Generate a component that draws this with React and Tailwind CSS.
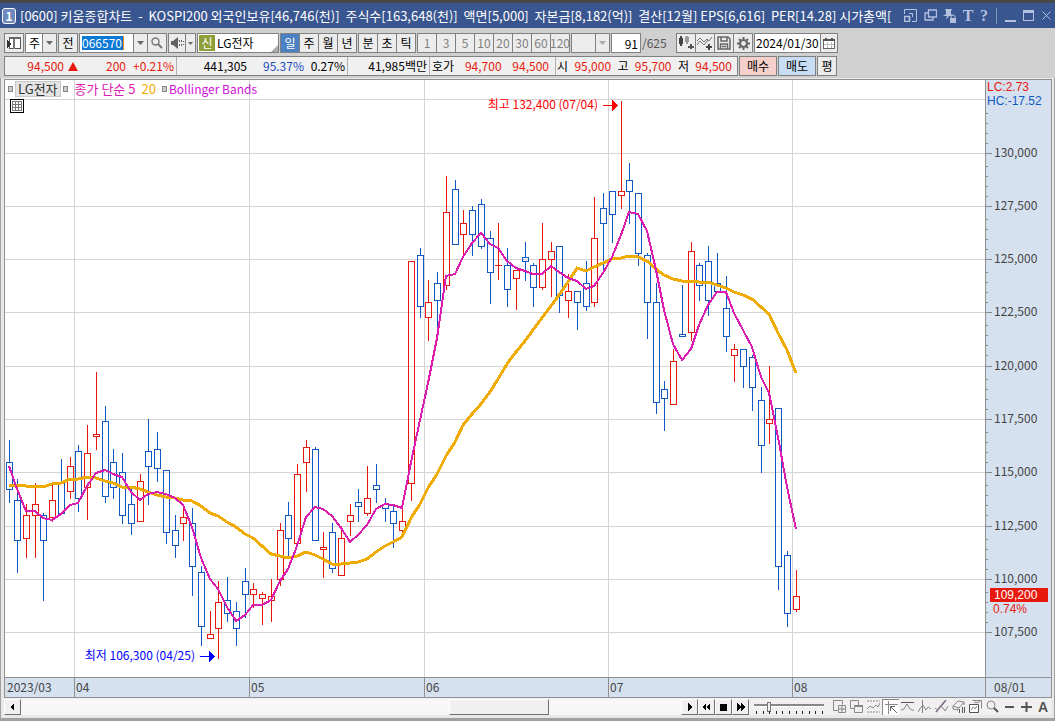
import { useState } from 'react';

// Each candle: [up (1) or down (0), high, body top, body bottom, low] as y positions
const CANDLES = [
  [0, 440, 462, 489, 502], [0, 479, 500, 540, 572], [1, 504, 515, 538, 557], [1, 483, 504, 515, 557],
  [0, 513, 515, 540, 600], [1, 483, 500, 517, 521], [0, 459, 483, 513, 513], [1, 457, 466, 491, 498],
  [0, 445, 451, 498, 511], [1, 425, 453, 487, 519], [1, 372, 434, 436, 449], [0, 406, 421, 496, 502],
  [0, 449, 462, 487, 498], [0, 453, 472, 515, 523], [0, 489, 504, 523, 534], [1, 474, 481, 521, 521],
  [0, 419, 451, 466, 504], [0, 432, 449, 468, 481], [0, 470, 470, 532, 543], [0, 515, 530, 545, 557],
  [1, 504, 517, 523, 540], [0, 508, 523, 566, 595], [0, 566, 572, 626, 645], [1, 611, 634, 638, 638],
  [1, 581, 602, 628, 658], [0, 577, 600, 613, 621], [0, 602, 611, 628, 645], [0, 568, 581, 594, 617],
  [1, 583, 589, 594, 607], [1, 592, 594, 598, 624], [1, 579, 596, 600, 621], [1, 523, 530, 579, 585],
  [0, 502, 515, 538, 557], [1, 464, 474, 543, 545], [1, 440, 447, 462, 491], [0, 447, 449, 540, 540],
  [1, 532, 547, 549, 577], [0, 523, 532, 568, 572], [1, 526, 538, 575, 575], [1, 504, 515, 521, 535],
  [0, 489, 502, 506, 521], [1, 466, 498, 513, 515], [0, 464, 485, 489, 502], [0, 498, 504, 508, 521],
  [0, 504, 511, 523, 547], [1, 502, 521, 530, 536], [1, 261, 261, 483, 500], [0, 248, 255, 306, 317],
  [1, 280, 302, 317, 340], [0, 272, 283, 300, 335], [1, 176, 212, 285, 289], [0, 180, 189, 244, 244],
  [1, 210, 223, 234, 254], [0, 206, 210, 234, 255], [0, 199, 204, 246, 248], [0, 231, 238, 272, 303],
  [1, 223, 265, 265, 279], [0, 248, 265, 289, 306], [1, 270, 270, 278, 309], [0, 242, 257, 261, 280],
  [0, 263, 265, 287, 306], [1, 223, 259, 287, 289], [1, 242, 251, 259, 296], [0, 246, 246, 295, 312],
  [1, 274, 291, 300, 317], [0, 291, 291, 302, 329], [0, 261, 283, 306, 310], [1, 197, 238, 302, 306],
  [0, 193, 208, 223, 271], [0, 191, 191, 214, 242], [1, 101, 191, 195, 208], [0, 163, 180, 191, 223],
  [0, 193, 193, 253, 265], [0, 253, 255, 302, 338], [0, 283, 302, 402, 413], [0, 381, 389, 398, 430],
  [1, 349, 361, 404, 404], [0, 285, 334, 336, 336], [1, 242, 251, 332, 340], [0, 263, 265, 285, 300],
  [0, 246, 261, 300, 315], [0, 253, 283, 291, 291], [0, 276, 308, 336, 351], [1, 344, 349, 355, 381],
  [0, 349, 349, 366, 387], [0, 355, 357, 387, 410], [0, 387, 400, 445, 472], [1, 366, 419, 423, 443],
  [0, 408, 408, 566, 589], [0, 551, 555, 613, 626], [1, 570, 596, 609, 611],
];

const MA5 = [
  466, 489, 511, 511, 518, 520, 514, 505, 503, 486, 473, 470, 474, 477, 492, 500, 494, 492, 494, 498, 505, 527, 558,
  579, 589, 607, 621, 615, 605, 605, 600, 581, 569, 546, 517, 507, 509, 516, 528, 542, 535, 525, 509, 504, 505, 508,
  462, 420, 383, 338, 276, 274, 257, 243, 233, 244, 248, 261, 268, 271, 274, 274, 266, 272, 278, 281, 289, 286, 273,
  257, 235, 212, 214, 231, 270, 310, 344, 360, 349, 325, 305, 292, 292, 313, 330, 347, 377, 393, 437, 487, 529,
];

const MA20 = [
  485, 485, 486, 486, 487, 484, 483, 479, 479, 477, 478, 481, 483, 487, 487, 489, 492, 495, 497, 498, 500, 501, 506,
  513, 516, 522, 527, 534, 538, 546, 554, 556, 558, 556, 552, 555, 559, 564, 564, 563, 562, 559, 552, 546, 542, 537,
  518, 504, 488, 474, 456, 442, 425, 414, 404, 392, 379, 364, 352, 341, 330, 318, 306, 295, 282, 268, 271, 267, 263,
  259, 258, 256, 257, 261, 269, 275, 279, 281, 281, 282, 282, 285, 288, 292, 295, 299, 307, 314, 333, 350, 373,
];

const PRICES = [
  ['130,000', 153], ['127,500', 206], ['125,000', 259], ['122,500', 312], ['120,000', 366],
  ['117,500', 419], ['115,000', 472], ['112,500', 526], ['110,000', 579], ['107,500', 632],
];

const MONTH_LINES = [74, 249, 424, 608, 792];

const candleX = (i) => Math.floor(9 + i * 8.746);
const toPoints = (ys) => ys.map((y, i) => `${candleX(i)},${y}`).join(' ');

const RED = '#e8190c';
const BLUE = '#1059c4';

function Arrow({ className = 'text-[#666]' }) {
  return (
    <svg className={`pointer-events-none ${className}`} width="7" height="4" viewBox="0 0 7 4" fill="currentColor">
      <path d="M0 0h7L3.5 4z" />
    </svg>
  );
}

function Group({ className = '', children }) {
  return (
    <div className={`flex h-5 shrink-0 items-stretch divide-x divide-[#808080] border border-[#808080] bg-[#ececec] ${className}`}>
      {children}
    </div>
  );
}

function IconButton({ label, className = 'w-[18px]', children }) {
  return (
    <button type="button" aria-label={label} className={`flex items-center justify-center ${className}`}>
      {children}
    </button>
  );
}

function TitleBar() {
  return (
    <header className="flex h-[25px] items-center bg-[#3a5690] text-white">
      <span className="ml-[2px] flex h-4 w-[14px] shrink-0 items-center justify-center rounded-[3px] border border-white bg-[#6f88bd] text-xs font-bold">
        1
      </span>
      <h1 className="ml-1 min-w-0 flex-1 overflow-hidden text-[13px] leading-5 whitespace-pre">
        {'[0600] 키움종합차트  -  KOSPI200 외국인보유[46,746(천)]  주식수[163,648(천)]  액면[5,000]  자본금[8,182(억)]  결산[12월] EPS[6,616]  PER[14.28] 시가총액['}
      </h1>
      <div className="flex shrink-0 items-center text-[#b4c2e0]">
        <IconButton label="레이아웃" className="w-5">
          <svg width="13" height="13" viewBox="0 0 13 13" fill="none" stroke="currentColor">
            <path d="M.5 5V.5h12v12H8" />
            <path d="M.5 7.500h5v5h-5z" strokeWidth="1.6" />
            <path d="M5 4.500h3.500V8" />
          </svg>
        </IconButton>
        <IconButton label="창 복제" className="w-5">
          <svg width="13" height="13" viewBox="0 0 13 13" fill="none" stroke="currentColor" strokeWidth="1.3">
            <path d="M4.500 1h8v7h-8zM4 4H1v7h8V8.500" />
          </svg>
        </IconButton>
        <IconButton label="고정" className="w-5">
          <svg width="14" height="14" viewBox="0 0 14 14" fill="currentColor">
            <path d="M2 0h7L8 2v3l2 2H6L3 11l1-4H0l3-2V2z" />
            <path d="M7 9h6v5H7z" />
            <path d="M8 9V8a2 2 0 0 1 4 0v1" fill="none" stroke="currentColor" />
          </svg>
        </IconButton>
        <button type="button" className="w-4 font-['Liberation_Serif',serif] text-base leading-5 font-bold">T</button>
        <button type="button" className="mr-1 w-4 font-['Liberation_Serif',serif] text-base leading-5 font-bold">?</button>
        <span className="h-4 w-px bg-[#8295bf]" />
        <IconButton label="최소화" className="ml-1 w-[18px]">
          <svg width="11" height="12" viewBox="0 0 11 12"><path d="M0 10h11v2H0z" fill="currentColor" /></svg>
        </IconButton>
        <IconButton label="최대화" className="w-[18px]">
          <svg width="11" height="11" viewBox="0 0 11 11"><path d="M0 0h11v11H0zM1 3v7h9V3z" fillRule="evenodd" fill="currentColor" /></svg>
        </IconButton>
        <IconButton label="닫기" className="w-[18px]">
          <svg width="9" height="9" viewBox="0 0 9 9"><path d="M.5.5l8 8M8.500.5l-8 8" stroke="currentColor" /></svg>
        </IconButton>
      </div>
    </header>
  );
}

function Toolbar() {
  const [period, setPeriod] = useState('일');
  const [code, setCode] = useState('066570');
  const [count, setCount] = useState('91');
  const [date, setDate] = useState('2024/01/30');

  return (
    <div className="flex items-center gap-px px-1 text-xs leading-[18px]">
      <Group className="w-5">
        <IconButton label="패널 열기">
          <svg width="16" height="14" viewBox="0 0 16 14" shapeRendering="crispEdges">
            <path d="M3.500 1.500h11v11h-11z" fill="#fff" stroke="#555" />
            <path d="M3 1h12v2H3z" fill="#666" />
            <path d="M7 3h2v10H7z" fill="#777" />
            <path d="M1 4l4 4-4 4z" fill="#333" />
          </svg>
        </IconButton>
      </Group>
      <Group className="w-8">
        <select aria-label="시장 구분" className="w-[17px] appearance-none bg-white pl-[3px] text-black">
          <option>주</option>
          <option>선</option>
        </select>
        <span className="flex flex-1 items-center justify-center"><Arrow /></span>
      </Group>
      <Group className="w-5">
        <button type="button" className="flex-1">전</button>
      </Group>
      <Group className="w-[88px]">
        <div className="flex w-[54px] items-center bg-white pl-[2px]">
          <input
            aria-label="종목코드"
            className="h-[14px] w-[42px] border-r border-[#ff8c1a] bg-[#0a78d4] text-white outline-none"
            value={code}
            onChange={(e) => setCode(e.target.value)}
          />
        </div>
        <IconButton label="종목 목록" className="w-[14px]"><Arrow /></IconButton>
        <IconButton label="종목 검색">
          <svg width="12" height="12" viewBox="0 0 12 12" fill="none" stroke="#777">
            <circle cx="4.500" cy="4.500" r="3.500" strokeWidth="1.4" />
            <path d="M7 7l4 4" strokeWidth="2" />
          </svg>
        </IconButton>
      </Group>
      <Group className="w-7">
        <IconButton label="소리" className="w-[17px]">
          <svg width="13" height="12" viewBox="0 0 13 12" fill="#606060">
            <path d="M0 4h2l5-4v12L2 8H0z" />
            <path d="M8 3h1v2H8zM8 7h1v2H8zM10 3h1v2h-1zM10 7h1v2h-1zM12 4h1v1h-1zM12 7h1v1h-1z" />
          </svg>
        </IconButton>
        <IconButton label="소리 설정" className="w-[9px]">
          <svg width="5" height="3" viewBox="0 0 5 3" fill="#666"><path d="M0 0h5L2.500 3z" /></svg>
        </IconButton>
      </Group>
      <Group className="w-[82px]">
        <div className="flex flex-1 items-center bg-white pl-px">
          <span className="mr-[2px] h-4 w-4 bg-[#8f9f3a] text-center leading-4 text-white">신</span>
          <span>LG전자</span>
          <svg className="mt-auto ml-auto" width="7" height="7" viewBox="0 0 7 7"><path d="M7 0v7H0z" fill="#aaa" /></svg>
        </div>
      </Group>
      <Group className="w-[77px]">
        {['일', '주', '월', '년'].map((p) => (
          <button
            key={p}
            type="button"
            onClick={() => setPeriod(p)}
            className={`flex-1 ${p === period ? 'bg-[#4a80c4] text-white' : 'text-black'}`}
          >
            {p}
          </button>
        ))}
      </Group>
      <Group className="w-[58px]">
        {['분', '초', '틱'].map((p) => (
          <button key={p} type="button" onClick={() => setPeriod(p)} className="flex-1">{p}</button>
        ))}
      </Group>
      <Group className="w-[153px] text-[#808080]">
        {['1', '3', '5', '10', '20', '30', '60', '120'].map((n) => (
          <button key={n} type="button" className="flex w-0 flex-1 justify-center">{n}</button>
        ))}
      </Group>
      <Group className="w-[39px]">
        <select aria-label="주기" disabled className="w-6 appearance-none bg-transparent">
          <option></option>
        </select>
        <span className="flex flex-1 items-center justify-center"><Arrow className="text-[#aaa]" /></span>
      </Group>
      <label className="flex items-center text-[#555]">
        <input
          aria-label="표시 개수"
          className="mr-px h-5 w-[30px] border border-[#808080] bg-white pr-[2px] text-right text-black outline-none"
          value={count}
          onChange={(e) => setCount(e.target.value)}
        />
        <span className="w-[33px]">/625</span>
      </label>
      <Group className="w-[77px]">
        <IconButton label="종목 추가" className="flex-1">
          <svg width="15" height="14" viewBox="0 0 15 14" shapeRendering="crispEdges">
            <path d="M0 2h4v6H0zM1 0h2v10H1z" fill="#444" />
            <path d="M6 1h4v5H6zM7 0h2v8H7z" fill="#999" />
            <path d="M11 8h2v5h-2zM9 10h6v2H9z" fill="#555" />
          </svg>
        </IconButton>
        <IconButton label="지표 추가" className="flex-1">
          <svg width="16" height="15" viewBox="0 0 16 15" fill="none" stroke="#777">
            <path d="M0 5l3-3 4 4 3-3 2 2 3-4M0 9l3-4 4 4 4-5" />
            <path d="M12 8v6M9 11h6" stroke="#444" strokeWidth="2" />
          </svg>
        </IconButton>
        <IconButton label="저장" className="flex-1">
          <svg width="14" height="14" viewBox="0 0 14 14" fill="none" stroke="#666" strokeWidth="1.5">
            <path d="M1 1h10l2 2v10H1zM4 1v4h6V1M3.500 13V8h7v5M5 10.500h4" />
          </svg>
        </IconButton>
        <IconButton label="설정" className="flex-1">
          <svg width="13" height="13" viewBox="0 0 13 13" fill="none" stroke="#666">
            <circle cx="6.500" cy="6.500" r="3.500" strokeWidth="2.200" />
            <path d="M6.500 0v2M6.500 11v2M0 6.500h2M11 6.500h2M2 2l1.500 1.500M9.500 9.500L11 11M11 2L9.500 3.500M3.500 9.500L2 11" strokeWidth="2" />
          </svg>
        </IconButton>
      </Group>
      <Group className="w-[84px]">
        <input
          aria-label="기준일"
          className="w-0 flex-1 bg-white pl-px outline-none"
          value={date}
          onChange={(e) => setDate(e.target.value)}
        />
        <IconButton label="달력" className="w-4">
          <svg width="12" height="11" viewBox="0 0 12 11" shapeRendering="crispEdges">
            <path d="M.5 1.500h11v9H.5z" fill="#fff" stroke="#666" />
            <path d="M0 1h12v2H0zM2 0h2v2H2zM8 0h2v2H8z" fill="#555" />
            <path d="M4.500 4v6M8.500 4v6M1 6.500h10" stroke="#bbb" />
          </svg>
        </IconButton>
      </Group>
    </div>
  );
}

function QuoteBar() {
  return (
    <div className="flex gap-px px-1 pt-[3px] text-xs leading-[18px]">
      <div className="flex h-5 divide-x divide-[#b0b0b0] border border-[#808080] bg-[#f0f0f0] whitespace-nowrap">
        <div className="flex w-[172px] justify-end gap-1 pr-[2px] text-[#e8190c]">
          <span className="flex items-center gap-1">
            94,500
            <svg width="10" height="9" viewBox="0 0 10 9" fill="currentColor"><path d="M5 0l5 9H0z" /></svg>
          </span>
          <span className="w-11 text-right">200</span>
          <span className="w-11 text-right">+0.21%</span>
        </div>
        <div className="flex w-[171px] justify-end gap-1 pr-[2px]">
          <span>441,305</span>
          <span className="w-[53px] text-right text-[#1a4cc0]">95.37%</span>
          <span className="w-[37px] text-right">0.27%</span>
        </div>
        <div className="w-[82px] pr-[2px] text-right">41,985백만</div>
        <div className="flex w-[126px] items-center justify-between pr-[6px] pl-[2px]">
          <span>호가</span>
          <span className="text-[#e8190c]">94,700</span>
          <span className="text-[#e8190c]">94,500</span>
        </div>
        <div className="flex w-[181px] items-center justify-between pr-[5px] pl-px">
          <span>시</span>
          <span className="text-[#e8190c]">95,000</span>
          <span>고</span>
          <span className="text-[#e8190c]">95,700</span>
          <span>저</span>
          <span className="text-[#e8190c]">94,500</span>
        </div>
      </div>
      <button type="button" className="h-5 w-[38px] border border-[#808080] bg-[#f5d0cb]">매수</button>
      <button type="button" className="h-5 w-[38px] border border-[#808080] bg-[#c8ddf3]">매도</button>
      <button type="button" className="h-5 w-5 border border-[#808080] bg-[#ececec]">평</button>
    </div>
  );
}

function Candle({ x, up, high, top, bottom, low }) {
  return (
    <g stroke={up ? RED : BLUE} fill="none">
      {high < top && <path d={`M${x + 0.5} ${high}V${top}`} />}
      {bottom < low && <path d={`M${x + 0.5} ${bottom}V${low + 1}`} />}
      {top === bottom ? (
        <path d={`M${x - 3} ${top + 0.5}h7`} />
      ) : (
        <rect x={x - 2.5} y={top + 0.5} width="6" height={bottom - top} />
      )}
    </g>
  );
}

function Legend() {
  const marker = <span className="h-[6px] w-[5px] border border-[#888] bg-[#ccc]" />;
  return (
    <div className="absolute top-px left-[3px] flex items-center text-[13px] leading-[14px]">
      {marker}
      <button type="button" className="mx-[2px] border border-[#c8c8c8] bg-[#e4e4e4] px-[2px] text-[#333]">LG전자</button>
      {marker}
      <span className="ml-[7px] text-[#dc1cb0]">종가 단순 5</span>
      <span className="mx-[6px] text-[#efaa00]">20</span>
      {marker}
      <span className="ml-[2px] text-xs leading-[14px] text-[#d010d8]">Bollinger Bands</span>
    </div>
  );
}

function Chart() {
  return (
    <div className="relative min-w-0 flex-1 bg-white">
      <svg className="block h-[597px] w-full" shapeRendering="crispEdges">
        <g stroke="#d4d4d4">
          <line x1="0" x2="100%" y1="19.5" y2="19.5" />
          {PRICES.map(([label, y]) => (
            <line key={label} x1="0" x2="100%" y1={y - 79.5} y2={y - 79.5} />
          ))}
        </g>
        <g transform="translate(-5 -80)">
          {MONTH_LINES.map((x) => (
            <path key={x} d={`M${x + 0.5} 80v597`} stroke="#d4d4d4" />
          ))}
          {CANDLES.map(([up, high, top, bottom, low], i) => (
            <Candle key={i} x={candleX(i)} up={up} high={high} top={top} bottom={bottom} low={low} />
          ))}
          <polyline points={toPoints(MA20)} fill="none" stroke="#f0ab00" strokeWidth="3" />
          <polyline points={toPoints(MA5)} fill="none" stroke="#dc1cb0" strokeWidth="2" />

          {/* period high and low */}
          <g fontSize="12">
            <text x="598" y="109" textAnchor="end" fill="#f00">최고 132,400 (07/04)</text>
            <path d="M603 105h9v-5l6 5.500-6 5.500v-5h-9z" fill="#f00" />
            <text x="195" y="660" textAnchor="end" fill="#00f">최저 106,300 (04/25)</text>
            <path d="M200 656h9v-5l6 5.500-6 5.500v-5h-9z" fill="#00f" />
          </g>
        </g>
      </svg>
      <Legend />
      <button type="button" aria-label="데이터 표" className="absolute top-[19px] left-[5px]">
        <svg width="14" height="14" viewBox="0 0 14 14" shapeRendering="crispEdges">
          <path d="M.5.5h13v13H.5z" fill="#fff" stroke="#000" />
          <path d="M2.500 2.500h9v9h-9zM5.500 2v10M8.500 2v10M2 5.500h10M2 8.500h10" fill="none" stroke="#777" />
        </svg>
      </button>
    </div>
  );
}

function PriceAxis() {
  return (
    <div className="relative w-[66px] shrink-0 border-l border-[#909090] bg-[#d6e1ef]">
      <svg className="block h-[597px] w-full" shapeRendering="crispEdges">
        <g transform="translate(-986 -80)">
          <path d="M986 113.500h2M986 123.500h2M986 133.500h2M986 143.500h2" stroke="#888" />
          {PRICES.map(([label, y]) => (
            <g key={label}>
              <path d={`M986 ${y + 0.5}h6`} stroke="#888" />
              {y < 632 && (
                <path d={`M986 ${y + 13.5}h2M986 ${y + 23.5}h2M986 ${y + 33.5}h2M986 ${y + 43.5}h2`} stroke="#888" />
              )}
              <text x="994" y={y + 4} fontSize="12" fill="#444">{label}</text>
            </g>
          ))}
        </g>
      </svg>
      <div className="absolute top-0 left-px font-['Liberation_Sans',sans-serif] text-xs leading-[14px]">
        <p className="text-[#e8190c]">LC:2.73</p>
        <p className="text-[#1059c4]">HC:-17.52</p>
      </div>
      <div className="absolute top-[508px] right-[3px] left-1 font-['Liberation_Sans',sans-serif] text-xs leading-[14px]">
        <p className="bg-[#e8190c] pl-1 text-white">109,200</p>
        <p className="pl-[3px] text-[#e8190c]">0.74%</p>
      </div>
    </div>
  );
}

function TimeAxis() {
  return (
    <div className="flex h-5 border-t border-[#909090] bg-[#d6e1ef] text-xs leading-[18px] text-[#444]">
      <div className="w-[70px] border-r border-[#909090] pl-[2px]">2023/03</div>
      <div className="w-[175px] border-r border-[#909090] pl-px">04</div>
      <div className="w-[175px] border-r border-[#909090] pl-px">05</div>
      <div className="w-[184px] border-r border-[#909090] pl-px">06</div>
      <div className="w-[184px] border-r border-[#909090] pl-px">07</div>
      <div className="flex-1 pl-px">08</div>
      <div className="w-[66px] border-l border-[#909090] pl-2">08/01</div>
    </div>
  );
}

function BevelButton({ label, path }) {
  return (
    <button
      type="button"
      aria-label={label}
      className="flex h-4 w-[17px] shrink-0 items-center justify-center border border-t-white border-r-[#707070] border-b-[#707070] border-l-white bg-[#f0f0f0]"
    >
      <svg width="9" height="8" viewBox="0 0 9 8" shapeRendering="crispEdges"><path d={path} /></svg>
    </button>
  );
}

const TOOLS = [
  ['창 추가', <g key="a"><path d="M4.500 10.500h-4v-10h9v4" /><path d="M5.500 5.500h7v7h-7zM9 6v6M6 9h6" /></g>],
  ['창 겹침', <g key="b"><path d="M.5.5h8v8h-8z" /><path d="M4.500 5.500h8v7h-8z" fill="#f0f0f0" /><path d="M4 6h9" strokeWidth="2" /></g>],
  ['영역 선택', <g key="c"><path d="M0 1h13M0 12h13" strokeDasharray="2 1" /><path d="M0 9l3-3 3 2 3-3 2 2 2-4" /></g>],
  ['커서', <g key="d"><path d="M0 3.500h13M3.500 0v13" /><path d="M5 5l7 7M5 5.500h5M5.500 5v5" stroke="#666" /></g>],
  ['수평선', <g key="e"><path d="M0 2.500h13" stroke="#555" /><path d="M0 10l3-1 3-5 3 5 2 1h2" /></g>],
  ['수직선', <g key="f"><path d="M4.500 0v13" stroke="#878" /><path d="M0 12l3-5 2-2 3 5 2-3 3 2" /></g>],
  ['추세선', <g key="g"><path d="M1 12L11 0" stroke="#768" strokeWidth="1.5" /><path d="M0 8l3 2 2-4 3 2 2 3 3-5" /></g>],
  ['지우기', <g key="h"><path d="M1 6l5-5 6 1-5 6zM1 6v3l5 1V8M12 2v3" /><path d="M7.500 9v4M10.500 7v6M12.500 7v6" stroke="#555" /></g>],
  ['차트 비교', <g key="i"><path d="M3.500.5h9v8" /><path d="M.5 4.500h9v8h-9z" fill="#fff" stroke="#555" /><path d="M2 10l2-3 2 2 2-3M5 3l2-1 2 1 2-2" /></g>],
  ['확대경', <g key="j"><circle cx="5" cy="5" r="4" /><path d="M8 8l4 4" strokeWidth="2" stroke="#555" /></g>],
  ['축소', <path key="k" d="M2 7h9" strokeWidth="2" stroke="#555" />],
  ['확대', <path key="l" d="M1 7h11M6.500 2v10" strokeWidth="2" stroke="#555" />],
];

function BottomBar() {
  return (
    <footer className="flex h-[17px] items-center bg-[#f0f0f0]">
      <BevelButton label="왼쪽으로" path="M6 0v8L2 4z" />
      <div className="flex h-4 flex-1 bg-[#f7f7f7] pl-[428px]">
        <button
          type="button"
          aria-label="스크롤 이동"
          className="h-4 w-[100px] border border-t-white border-r-[#707070] border-b-[#707070] border-l-white bg-[#f0f0f0]"
        />
      </div>
      <BevelButton label="오른쪽으로" path="M3 0v8l4-4z" />
      <BevelButton label="빠르게 뒤로" path="M4 0v8L0 4zM8 0v8L4 4z" />
      <BevelButton label="정지" path="M1 1h7v7H1z" />
      <BevelButton label="빠르게 앞으로" path="M1 0v8l4-4zM5 0v8l4-4z" />
      <div className="ml-[5px] flex w-[70px] flex-col">
        <input
          type="range"
          aria-label="속도"
          min="0"
          max="10"
          defaultValue="2"
          className="h-[11px] w-full appearance-none bg-transparent [&::-webkit-slider-runnable-track]:h-[3px] [&::-webkit-slider-runnable-track]:border-t-2 [&::-webkit-slider-runnable-track]:border-b [&::-webkit-slider-runnable-track]:border-t-[#888] [&::-webkit-slider-runnable-track]:border-b-white [&::-webkit-slider-thumb]:-mt-1 [&::-webkit-slider-thumb]:h-[10px] [&::-webkit-slider-thumb]:w-1 [&::-webkit-slider-thumb]:appearance-none [&::-webkit-slider-thumb]:border [&::-webkit-slider-thumb]:border-[#777] [&::-webkit-slider-thumb]:bg-[#f0f0f0]"
        />
        <svg width="70" height="3" shapeRendering="crispEdges">
          <path d="M2 1.500h68" stroke="#222" strokeWidth="3" strokeDasharray="1 5.600" />
        </svg>
      </div>
      <div className="ml-[7px] flex items-center">
        {TOOLS.map(([label, icon]) => (
          <IconButton
            key={label}
            label={label}
            className={label === '커서' ? 'h-4 w-[17px] border-t border-l border-[#888] bg-white' : 'h-4 w-[17px]'}
          >
            <svg width="13" height="13" viewBox="0 0 13 13" fill="none" stroke="#888">{icon}</svg>
          </IconButton>
        ))}
        <button type="button" className="h-4 w-4 font-['Liberation_Sans',sans-serif] text-sm leading-4 font-bold text-[#555]">A</button>
      </div>
    </footer>
  );
}

function App() {
  return (
    <div className="flex min-h-screen flex-col border-t-[3px] border-t-[#484848] bg-[#a0a0a0] font-['Noto_Sans_CJK_KR',sans-serif] text-black">
      <TitleBar />
      <main className="border-x border-[#a0a0a0] bg-[#e8e8e8]">
        <div className="-mx-px bg-[#d0d0d0] pt-[5px] pb-[2px]">
          <Toolbar />
          <QuoteBar />
        </div>
        <div className="px-[3px] pt-px pb-[3px]">
          <div className="-mr-px border border-[#909090]">
            <div className="flex">
              <Chart />
              <PriceAxis />
            </div>
            <TimeAxis />
          </div>
          <BottomBar />
        </div>
      </main>
    </div>
  );
}

export default App;
